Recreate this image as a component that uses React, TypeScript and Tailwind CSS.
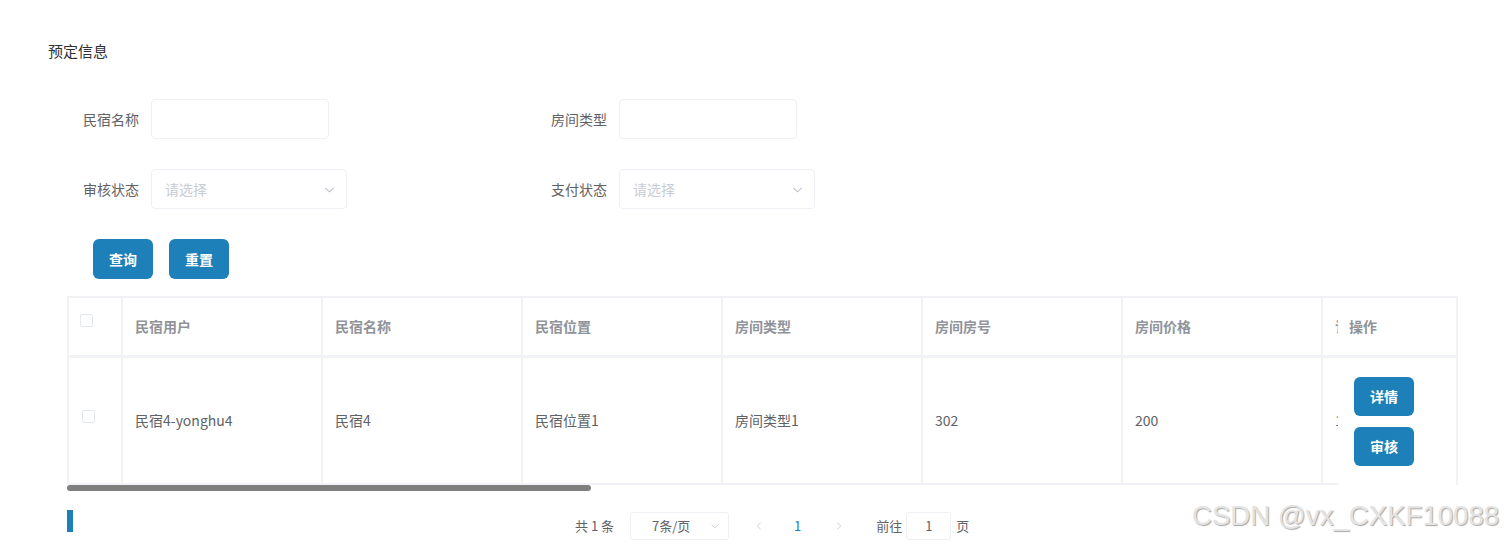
import React from "react";

const Chevron = ({ className = "" }: { className?: string }) => (
  <svg viewBox="0 0 12 12" className={className} fill="none" stroke="currentColor" strokeWidth="1">
    <path d="M2 4.5 L6 8 L10 4.5" />
  </svg>
);

const Label = ({ children }: { children: React.ReactNode }) => (
  <div className="w-[92px] pr-[12px] text-right text-[14px] text-[#606266] leading-[40px]">{children}</div>
);

const Checkbox = () => (
  <div className="w-[13px] h-[13px] rounded-[2px] border border-[#e4e7ed] bg-white" />
);

const cols = ["民宿用户", "民宿名称", "民宿位置", "房间类型", "房间房号", "房间价格", "订单状态"];
const vals = ["民宿4-yonghu4", "民宿4", "民宿位置1", "房间类型1", "302", "200", "1"];

export default function App() {
  return (
    <div className="relative w-[1504px] h-[544px] bg-white overflow-hidden font-['Noto_Sans_CJK_SC','Noto_Sans',sans-serif]">
      <div className="pt-[41px]">
        <div className="pl-[48px] text-[15px] leading-[20px] text-[#303133]">预定信息</div>

        {/* form */}
        <div className="mt-[38px] pl-[59px] flex flex-col gap-[30px]">
          <div className="flex">
            <div className="w-[468px] flex">
              <Label>民宿名称</Label>
              <div className="w-[178px] h-[40px] rounded-[4px] border border-[#eef0f5] bg-white" />
            </div>
            <div className="flex">
              <Label>房间类型</Label>
              <div className="w-[178px] h-[40px] rounded-[4px] border border-[#eef0f5] bg-white" />
            </div>
          </div>
          <div className="flex">
            <div className="w-[468px] flex">
              <Label>审核状态</Label>
              <div className="w-[196px] h-[40px] rounded-[4px] border border-[#eef0f5] bg-white flex items-center pl-[13px] pr-[10px]">
                <span className="flex-1 text-[14px] text-[#c8ccd3]">请选择</span>
                <Chevron className="w-[13px] h-[13px] text-[#c0c4cc]" />
              </div>
            </div>
            <div className="flex">
              <Label>支付状态</Label>
              <div className="w-[196px] h-[40px] rounded-[4px] border border-[#eef0f5] bg-white flex items-center pl-[13px] pr-[10px]">
                <span className="flex-1 text-[14px] text-[#c8ccd3]">请选择</span>
                <Chevron className="w-[13px] h-[13px] text-[#c0c4cc]" />
              </div>
            </div>
          </div>
        </div>

        {/* buttons */}
        <div className="mt-[30px] pl-[93px] flex gap-[16px]">
          <button className="w-[60px] h-[40px] rounded-[6px] bg-[#1e80b8] text-white text-[14px] font-bold">查询</button>
          <button className="w-[60px] h-[40px] rounded-[6px] bg-[#1e80b8] text-white text-[14px] font-bold">重置</button>
        </div>

        {/* table */}
        <div className="mt-[17px] ml-[67px] w-[1391px] flex">
          <div className="w-[1271px] overflow-hidden border-l-2 border-t-2 border-b-2 border-[#f0f2f6]">
            <div className="w-[1600px]">
              <div className="flex h-[60px] border-b-[3px] border-[#f0f2f6]">
                <div className="w-[54px] shrink-0 border-r-2 border-[#f0f2f6] flex justify-start pt-[16px] pl-[11px]">
                  <Checkbox />
                </div>
                {cols.map((c) => (
                  <div key={c} className="w-[200px] shrink-0 border-r-2 border-[#f0f2f6] flex items-center pl-[12px] text-[14px] font-bold text-[#909399]">
                    {c}
                  </div>
                ))}
              </div>
              <div className="flex h-[125px]">
                <div className="w-[54px] shrink-0 border-r-2 border-[#f0f2f6] flex justify-start items-center pl-[13px] pb-[9px]">
                  <Checkbox />
                </div>
                {vals.map((v, i) => (
                  <div key={i} className="w-[200px] shrink-0 border-r-2 border-[#f0f2f6] flex items-center pl-[12px] text-[14px] text-[#606266]">
                    {v}
                  </div>
                ))}
              </div>
            </div>
          </div>
          <div className="w-[120px] flex flex-col border-t-2 border-r-2 border-[#f0f2f6]">
            <div className="h-[60px] border-b-[3px] border-[#f0f2f6] flex items-center pl-[11px] text-[14px] font-bold text-[#909399]">
              操作
            </div>
            <div className="h-[127px] flex flex-col justify-center gap-[11px] pl-[16px]">
              <button className="w-[60px] h-[39px] rounded-[6px] bg-[#1e80b8] text-white text-[14px] font-bold">详情</button>
              <button className="w-[60px] h-[39px] rounded-[6px] bg-[#1e80b8] text-white text-[14px] font-bold">审核</button>
            </div>
          </div>
        </div>

        {/* scrollbar */}
        <div className="ml-[67px] w-[524px] h-[6px] rounded-full bg-[#7f7f7f]" />

        {/* pagination */}
        <div className="mt-[19px] ml-[67px] w-[1391px] flex items-start">
          <div className="w-[6px] h-[22px] bg-[#1e80b8]" />
          <div className="ml-[502px] mt-[2px] flex items-center text-[13px] text-[#606266]">
            <span>共 1 条</span>
            <div className="ml-[16px] w-[99px] h-[28px] rounded-[3px] border border-[#eef0f5] flex items-center pl-[21px] pr-[8px]">
              <span className="flex-1">7条/页</span>
              <Chevron className="w-[10px] h-[10px] text-[#c0c4cc]" />
            </div>
            <svg viewBox="0 0 12 12" className="ml-[25px] w-[10px] h-[10px] text-[#c0c4cc]" fill="none" stroke="currentColor" strokeWidth="1">
              <path d="M8 2 L4 6 L8 10" />
            </svg>
            <span className="ml-[30px] text-[#1e80b8]">1</span>
            <svg viewBox="0 0 12 12" className="ml-[33px] w-[10px] h-[10px] text-[#c0c4cc]" fill="none" stroke="currentColor" strokeWidth="1">
              <path d="M4 2 L8 6 L4 10" />
            </svg>
            <span className="ml-[32px]">前往</span>
            <div className="ml-[4px] w-[45px] h-[28px] rounded-[3px] border border-[#eef0f5] flex items-center justify-center">1</div>
            <span className="ml-[5px]">页</span>
          </div>
        </div>
      </div>

      <div className="absolute left-[1192px] top-[498px] text-[27.6px] leading-[36px] text-[#e4e4e4] font-['Liberation_Sans',sans-serif] [text-shadow:1px_1px_1px_rgba(0,0,0,0.35)] whitespace-nowrap">
        CSDN @vx_CXKF10088
      </div>
    </div>
  );
}
